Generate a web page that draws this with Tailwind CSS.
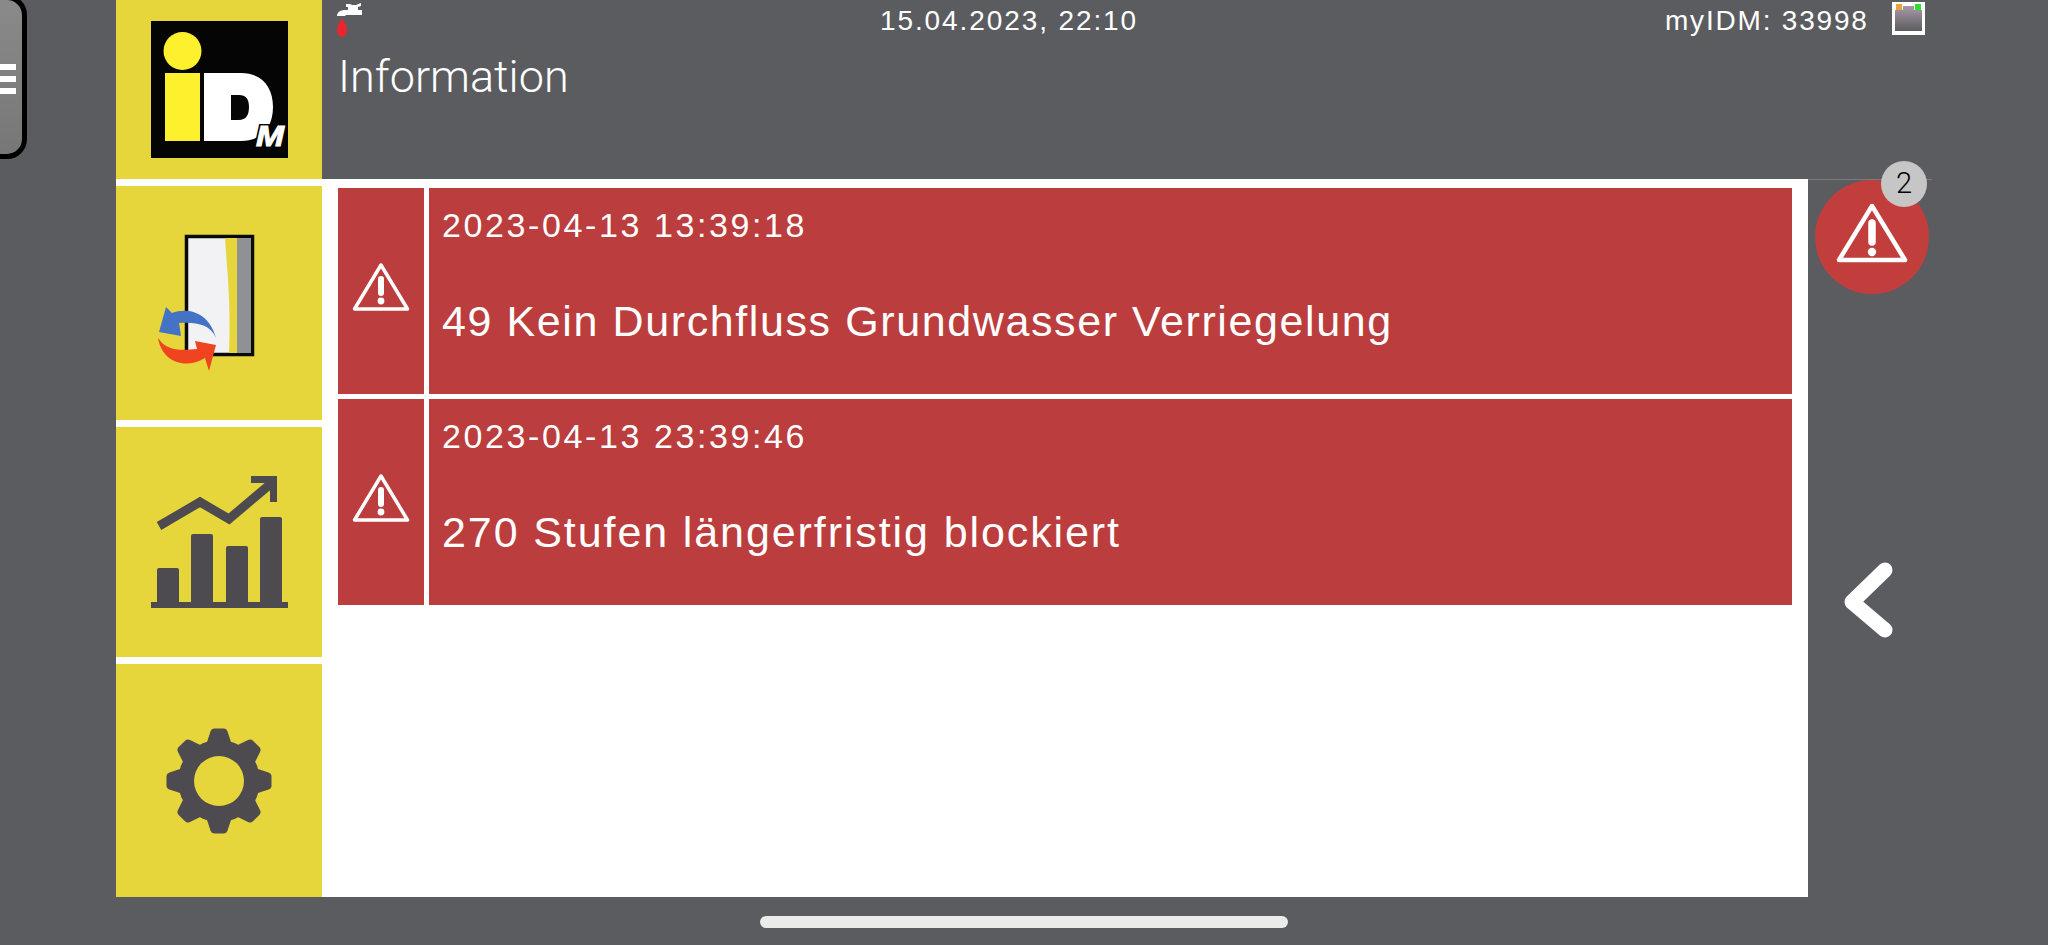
<!DOCTYPE html>
<html lang="de">
<head>
<meta charset="utf-8">
<script src="https://cdn.jsdelivr.net/npm/@tailwindcss/browser@4"></script>
<title>Information</title>
</head>
<body class="m-0 overflow-hidden bg-[#5b5c60]">
<div class="relative flex h-[945px] w-[2048px] items-start overflow-hidden bg-[#5b5c60] pl-[116px] font-['Liberation_Sans',sans-serif] text-white">

  <!-- hamburger -->
  <div class="absolute -left-[40px] -top-[5px] flex h-[164px] w-[67px] flex-col items-end justify-center gap-[6px] rounded-[20px] border-[5px] border-black bg-gradient-to-b from-[#8a8a8a] to-[#777777] pr-[6px] pt-[4px]">
    <span class="h-[6px] w-[22px] bg-white"></span>
    <span class="h-[6px] w-[22px] bg-white"></span>
    <span class="h-[6px] w-[22px] bg-white"></span>
  </div>

  <!-- left column -->
  <div class="flex h-[897px] w-[206px] flex-col bg-white">
    <div class="flex h-[179px] items-start justify-center bg-[#e6d63b] pt-[21px]">
      <svg width="137" height="137" viewBox="0 0 137 137">
        <rect width="137" height="137" fill="#050505"/>
        <circle cx="31.5" cy="30" r="19" fill="#fdf02d"/>
        <rect x="14" y="52" width="35" height="68" fill="#fdf02d"/>
        <path fill-rule="evenodd" fill="#fff" d="M53 52H90C111 52 122 66 122 86C122 106 111 120 90 120H53ZM80 74V99H88C95 99 98 94 98 86C98 78 95 74 88 74Z"/>
        <text x="105" y="125" font-family="Liberation Sans" font-size="29" font-weight="700" font-style="italic" fill="#050505" stroke="#050505" stroke-width="4" textLength="28" lengthAdjust="spacingAndGlyphs">M</text>
        <text x="105" y="125" font-family="Liberation Sans" font-size="29" font-weight="700" font-style="italic" fill="#fff" stroke="#fff" stroke-width="1" textLength="28" lengthAdjust="spacingAndGlyphs">M</text>
      </svg>
    </div>
    <div class="mt-[7px] flex h-[234px] items-center justify-center bg-[#e6d63b]">
      <svg width="206" height="234" viewBox="116 186 206 234">
        <rect x="186.5" y="236.5" width="66" height="118" fill="#f2f2f4" stroke="#0a0a0a" stroke-width="3.5"/>
        <path d="M225 238C227 270 231 300 229 353H237V238Z" fill="#e6d63b"/>
        <rect x="237" y="238" width="14" height="115" fill="#8f9195"/>
        <path d="M166 307L172 313C188 307 209 312 216 338C210 324 196 322 179 323L181 336L159 332Z" fill="#4472c4"/>
        <path d="M158 338C166 350 178 351 197 349L195 341L216 345L209 371L205 358C185 370 162 362 158 338Z" fill="#f0431f"/>
      </svg>
    </div>
    <div class="mt-[7px] flex h-[230px] items-center justify-center bg-[#e6d63b]">
      <svg width="206" height="230" viewBox="116 427 206 230" fill="#4d4b4f">
        <rect x="157" y="568" width="22" height="38" rx="2"/>
        <rect x="191" y="534" width="22" height="72" rx="2"/>
        <rect x="226" y="546" width="22" height="60" rx="2"/>
        <rect x="260" y="517" width="22" height="89" rx="2"/>
        <rect x="151" y="602" width="137" height="6"/>
        <path d="M159 526L200 502L229 519L274 481" fill="none" stroke="#4d4b4f" stroke-width="9"/>
        <path d="M251 476H277V502H270V483H251Z"/>
      </svg>
    </div>
    <div class="mt-[7px] flex h-[233px] items-center justify-center bg-[#e6d63b]">
      <svg width="106" height="106" viewBox="-53 -53 106 106" fill="#4d4b4f">
        <circle r="41"/>
        <path d="M-13-36L-8.500-49.500Q-7.500-52.500-4.500-52.500H4.500Q7.500-52.500 8.500-49.500L13-36Z"/>
        <path transform="rotate(45)" d="M-13-36L-8.500-49.500Q-7.500-52.500-4.500-52.500H4.500Q7.500-52.500 8.500-49.500L13-36Z"/>
        <path transform="rotate(90)" d="M-13-36L-8.500-49.500Q-7.500-52.500-4.500-52.500H4.500Q7.500-52.500 8.500-49.500L13-36Z"/>
        <path transform="rotate(135)" d="M-13-36L-8.500-49.500Q-7.500-52.500-4.500-52.500H4.500Q7.500-52.500 8.500-49.500L13-36Z"/>
        <path transform="rotate(180)" d="M-13-36L-8.500-49.500Q-7.500-52.500-4.500-52.500H4.500Q7.500-52.500 8.500-49.500L13-36Z"/>
        <path transform="rotate(225)" d="M-13-36L-8.500-49.500Q-7.500-52.500-4.500-52.500H4.500Q7.500-52.500 8.500-49.500L13-36Z"/>
        <path transform="rotate(270)" d="M-13-36L-8.500-49.500Q-7.500-52.500-4.500-52.500H4.500Q7.500-52.500 8.500-49.500L13-36Z"/>
        <path transform="rotate(315)" d="M-13-36L-8.500-49.500Q-7.500-52.500-4.500-52.500H4.500Q7.500-52.500 8.500-49.500L13-36Z"/>
        <circle r="25" fill="#e6d63b"/>
      </svg>
    </div>
  </div>

  <!-- right part -->
  <div class="flex w-[1726px] flex-col">
    <header class="relative h-[179px] shrink-0">
      <svg class="absolute left-[14px] top-[1px]" width="28" height="38" viewBox="0 0 28 38">
        <path d="M1 15C1 11 5 9 9 9H12V6H10V3H14L16 4H20L25 2V5L22 6V9H26V14H10L9 15Z" fill="#fff"/>
        <path d="M6 17C8 21 11 24 11 29C11 33 9 36 6 36C3 36 1 33 1 29C1 24 4 21 6 17Z" fill="#e8262f"/>
      </svg>
      <h1 class="absolute left-[16px] top-[50px] font-['Roboto',sans-serif] text-[45px] font-light leading-[54px]">Information</h1>
      <span class="absolute left-[558px] top-[6px] text-[28px] leading-[30px] tracking-[1.9px]">15.04.2023, 22:10</span>
      <span class="absolute left-[1343px] top-[6px] text-[28px] leading-[30px] tracking-[1.8px]">myIDM: 33998</span>
      <svg class="absolute left-[1570px] top-[2px]" width="33" height="33" viewBox="0 0 33 33">
        <defs><linearGradient id="eth" x1="0" y1="0" x2="0" y2="1"><stop offset="0" stop-color="#a89aa8"/><stop offset="1" stop-color="#5c5c5e"/></linearGradient></defs>
        <rect width="33" height="33" fill="#fff"/>
        <path d="M3 8H11V4H22V8H30V29H3Z" fill="url(#eth)"/>
        <rect x="4" y="2" width="6" height="6" fill="#e8a33a"/>
        <rect x="23" y="2" width="6" height="6" fill="#2ee02e"/>
      </svg>
    </header>

    <div class="flex h-[718px] shrink-0">
      <main class="flex w-[1486px] flex-col gap-[5px] bg-white px-[16px] pt-[9px]">
        <article class="flex h-[206px] gap-[5px]">
          <div class="flex w-[86px] justify-center bg-[#bb3d3d] pt-[74px]">
            <svg width="58" height="50" viewBox="0 0 58 50"><path d="M29 3L55.500 47H2.500Z" fill="none" stroke="#fff" stroke-width="3.500" stroke-linejoin="round"/><path d="M29 17V31" stroke="#fff" stroke-width="6" stroke-linecap="round"/><circle cx="29" cy="39" r="3.400" fill="#fff"/></svg>
          </div>
          <div class="flex-1 bg-[#bb3d3d] pl-[13px]">
            <p class="pt-[17px] text-[34px] leading-[40px] tracking-[2.6px]">2023-04-13 13:39:18</p>
            <p class="pt-[51px] text-[43px] leading-[50px] tracking-[1.6px]">49 Kein Durchfluss Grundwasser Verriegelung</p>
          </div>
        </article>
        <article class="flex h-[206px] gap-[5px]">
          <div class="flex w-[86px] justify-center bg-[#bb3d3d] pt-[74px]">
            <svg width="58" height="50" viewBox="0 0 58 50"><path d="M29 3L55.500 47H2.500Z" fill="none" stroke="#fff" stroke-width="3.500" stroke-linejoin="round"/><path d="M29 17V31" stroke="#fff" stroke-width="6" stroke-linecap="round"/><circle cx="29" cy="39" r="3.400" fill="#fff"/></svg>
          </div>
          <div class="flex-1 bg-[#bb3d3d] pl-[13px]">
            <p class="pt-[17px] text-[34px] leading-[40px] tracking-[2.6px]">2023-04-13 23:39:46</p>
            <p class="pt-[51px] text-[43px] leading-[50px] tracking-[1.9px]">270 Stufen längerfristig blockiert</p>
          </div>
        </article>
      </main>
      <aside class="relative flex-1">
        <span class="absolute left-0 top-0 h-px w-[124px] bg-white/20"></span>
        <div class="absolute left-[7px] top-[1px] flex h-[114px] w-[114px] items-center justify-center rounded-full bg-[#c23e3c] pb-[11px]">
          <svg width="76" height="64" viewBox="0 0 76 64"><path d="M38 6L71 60H5Z" fill="none" stroke="#fff" stroke-width="4.500" stroke-linejoin="round"/><path d="M38 23V42" stroke="#fff" stroke-width="7.500" stroke-linecap="round"/><circle cx="38" cy="52" r="4.200" fill="#fff"/></svg>
        </div>
        <div class="absolute left-[73px] -top-[18px] flex h-[46px] w-[46px] items-center justify-center rounded-full bg-[#c6c6c6] font-['Roboto',sans-serif] text-[29px] font-light text-black">2</div>
        <svg class="absolute left-[35px] top-[373px]" width="60" height="90" viewBox="0 0 60 90"><path d="M42 18L9 50L42 78" fill="none" stroke="#fff" stroke-width="15" stroke-linecap="round" stroke-linejoin="round"/></svg>
      </aside>
    </div>
  </div>

  <div class="absolute left-[760px] top-[916px] h-[12px] w-[528px] rounded-full bg-[#ebebe9]"></div>
</div>
</body>
</html>
